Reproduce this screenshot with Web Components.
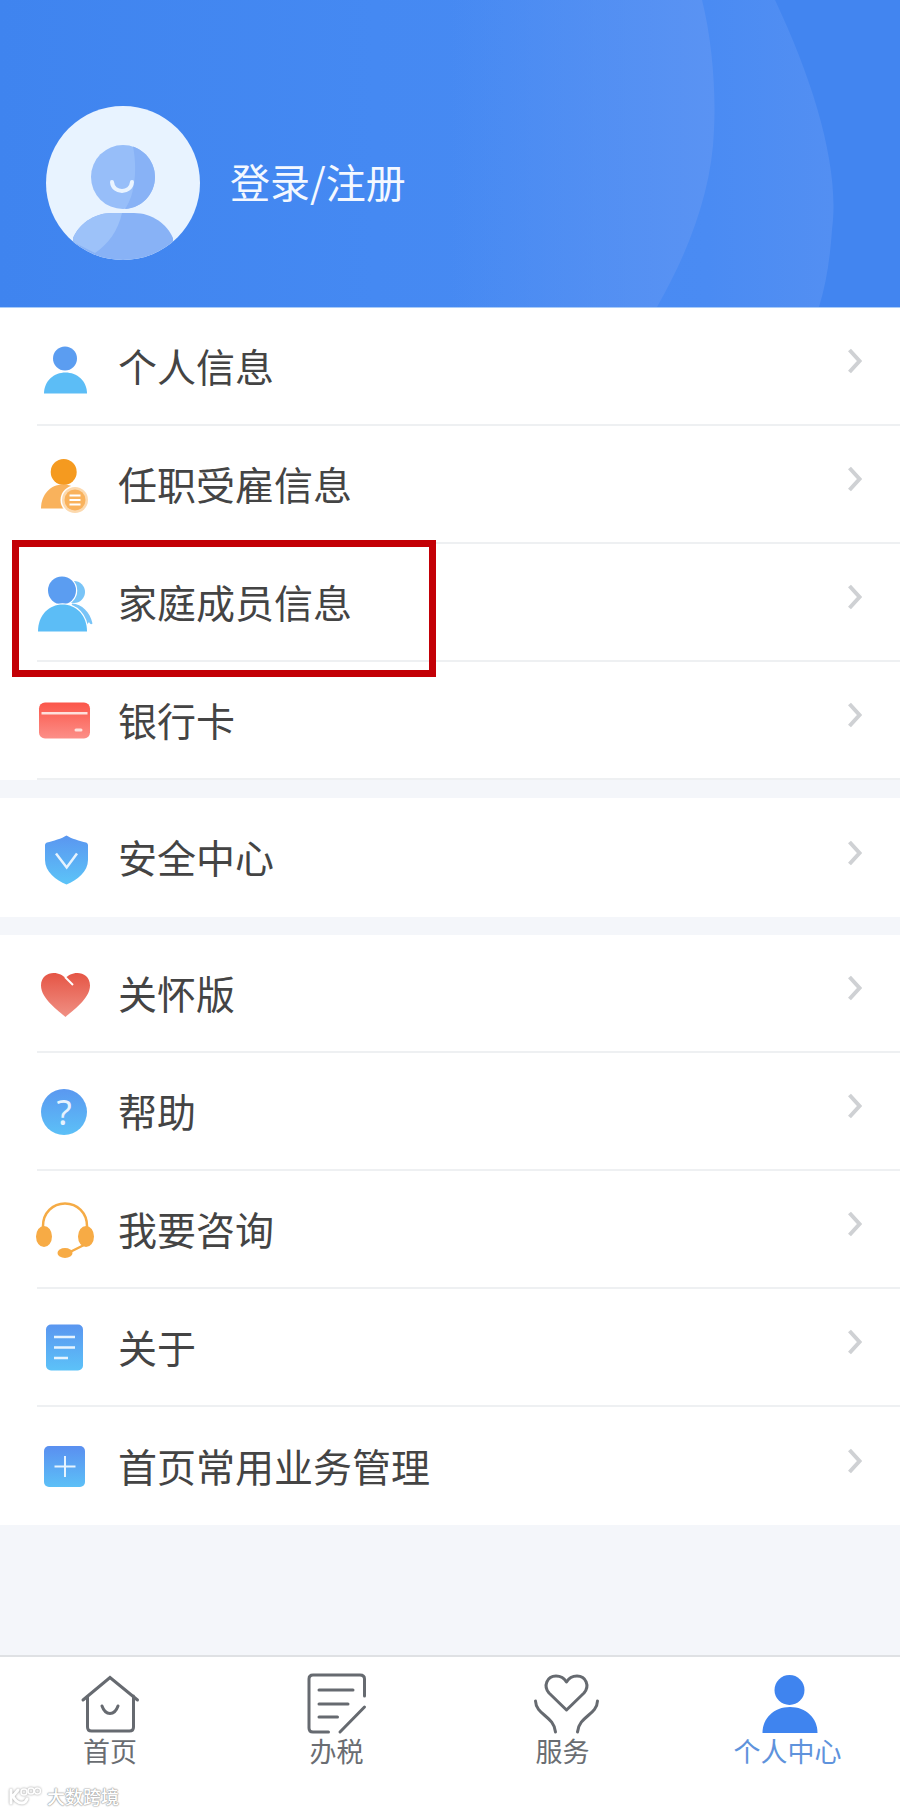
<!DOCTYPE html>
<html lang="zh">
<head>
<meta charset="utf-8">
<title>个人中心</title>
<style>
  html, body { margin: 0; padding: 0; }
  body {
    width: 900px;
    height: 1813px;
    display: flex;
    flex-direction: column;
    background: #f4f6fa;
    font-family: "Noto Sans CJK SC", "Noto Sans", sans-serif;
    overflow: hidden;
  }
  menu-group + menu-group { margin-top: 18px; }
  .spacer { flex: 1; }
</style>
</head>
<body>

<profile-header label="登录/注册"></profile-header>

<menu-group>
  <menu-row label="个人信息">
    <svg slot="icon" viewBox="0 0 60 60" width="60" height="60">
      <circle cx="29" cy="22.500" r="12" fill="#5b9df1"/>
      <path d="M8 57.500C8 45 18 36.500 29.500 36.500S51 45 51 57.500Z" fill="#5cbdf6"/>
    </svg>
  </menu-row>
  <menu-row label="任职受雇信息">
    <svg slot="icon" viewBox="0 0 60 60" width="60" height="60">
      <circle cx="27.700" cy="18" r="13" fill="#f59a1f"/>
      <path d="M5 54.500C5 41 14 30.500 27 30.500C37 30.500 44 36 46 44L36 54.500Z" fill="#f9b25c"/>
      <circle cx="39" cy="46" r="14.500" fill="#fff"/>
      <circle cx="39" cy="46" r="13" fill="#fcd9ae"/>
      <circle cx="39" cy="46" r="10.500" fill="#f9b25c"/>
      <path d="M33.500 41.500h11M33.500 46h11M33.500 50.500h11" stroke="#fff" stroke-width="2"/>
    </svg>
  </menu-row>
  <menu-row label="家庭成员信息" marked>
    <svg slot="icon" viewBox="0 0 60 60" width="60" height="60">
      <circle cx="38" cy="20" r="11" fill="#79c4f7"/>
      <path d="M36 31.500C46 32 54 40 56.500 51.500C55 53 54 52 53 50L45 60H30Z" fill="#79c4f7"/>
      <circle cx="26" cy="18.500" r="14" fill="#5b9df1" stroke="#fff" stroke-width="2.500" paint-order="stroke"/>
      <path d="M2 59.500C2 43 13 32.500 26.500 32.500S51 43 51 59.500Z" fill="#5cbdf6" stroke="#fff" stroke-width="2.500" paint-order="stroke"/>
    </svg>
  </menu-row>
  <menu-row label="银行卡">
    <svg slot="icon" viewBox="0 0 60 60" width="60" height="60">
      <defs><linearGradient id="card" x1="0" y1="0" x2="0" y2="1"><stop offset="0" stop-color="#fb5549"/><stop offset="1" stop-color="#fc8f88"/></linearGradient></defs>
      <rect x="3" y="12.500" width="51" height="36" rx="6" fill="url(#card)"/>
      <rect x="5.500" y="22" width="46" height="2.500" fill="#fde0dc"/>
      <rect x="38.500" y="38.500" width="8" height="3" rx="1.500" fill="#fde0dc"/>
    </svg>
  </menu-row>
</menu-group>

<menu-group>
  <menu-row label="安全中心" nosep tall>
    <svg slot="icon" viewBox="0 0 60 60" width="60" height="60">
      <defs><linearGradient id="shield" x1="0" y1="0" x2="0" y2="1"><stop offset="0" stop-color="#5a96f0"/><stop offset="1" stop-color="#5cc4f8"/></linearGradient></defs>
      <path d="M30.500 7.500C35 10.500 44 13 50 14.500C51.500 15 52 16 52 17.500V32C52 44 41 52 30.500 56.500C20 52 9 44 9 32V17.500C9 16 9.500 15 11 14.500C17 13 26 10.500 30.500 7.500Z" fill="url(#shield)"/>
      <path d="M20 25.500L30.700 39.500L41 25.500" fill="none" stroke="#e6f3fe" stroke-width="2.500"/>
    </svg>
  </menu-row>
</menu-group>

<menu-group>
  <menu-row label="关怀版">
    <svg slot="icon" viewBox="0 0 60 60" width="60" height="60">
      <defs><linearGradient id="heart" x1="0" y1="0" x2="0" y2="1"><stop offset="0" stop-color="#e55545"/><stop offset="1" stop-color="#f09084"/></linearGradient></defs>
      <path d="M29.500 54C23 48 5 36 5 22.500C5 14 11.500 10 17.500 10C23 10 27 12.500 29.500 15C32 12.500 36 10 41.500 10C47.500 10 54 14 54 22.500C54 36 36 48 29.500 54Z" fill="url(#heart)"/>
      <path d="M29 14L37 22" stroke="#fff" stroke-width="2"/>
    </svg>
  </menu-row>
  <menu-row label="帮助">
    <svg slot="icon" viewBox="0 0 60 60" width="60" height="60">
      <defs><linearGradient id="help" x1="0" y1="0" x2="0" y2="1"><stop offset="0" stop-color="#5a98f0"/><stop offset="1" stop-color="#5cc0f7"/></linearGradient></defs>
      <circle cx="28" cy="31" r="23" fill="url(#help)"/>
      <text x="28" y="44" text-anchor="middle" font-family="'Noto Sans', sans-serif" font-size="35" fill="#e6f3fe">?</text>
    </svg>
  </menu-row>
  <menu-row label="我要咨询">
    <svg slot="icon" viewBox="0 0 60 60" width="60" height="60">
      <path d="M7 34V27C7 14 16.500 4.500 29 4.500S51 14 51 27V34" fill="none" stroke="#f5ab45" stroke-width="2.500"/>
      <ellipse cx="8" cy="37.500" rx="8" ry="10.500" fill="#f7ab45"/>
      <ellipse cx="50" cy="37.500" rx="8" ry="10.500" fill="#f7ab45"/>
      <path d="M34 53L48 46" stroke="#f5ab45" stroke-width="2.500"/>
      <ellipse cx="29" cy="54" rx="7.500" ry="5" fill="#f7ab45"/>
    </svg>
  </menu-row>
  <menu-row label="关于">
    <svg slot="icon" viewBox="0 0 60 60" width="60" height="60">
      <defs><linearGradient id="doc" x1="0" y1="0" x2="0" y2="1"><stop offset="0" stop-color="#5a96f0"/><stop offset="1" stop-color="#5cc2f8"/></linearGradient></defs>
      <rect x="10" y="7.500" width="37" height="46" rx="5" fill="url(#doc)"/>
      <path d="M18 20H39M18 30.500H39M18 41H32" stroke="#e6f3fe" stroke-width="2.500"/>
    </svg>
  </menu-row>
  <menu-row label="首页常用业务管理" nosep>
    <svg slot="icon" viewBox="0 0 60 60" width="60" height="60">
      <defs><linearGradient id="plus" x1="0" y1="0" x2="0" y2="1"><stop offset="0" stop-color="#5a8ff0"/><stop offset="1" stop-color="#5cc0f7"/></linearGradient></defs>
      <rect x="8" y="10" width="41" height="41" rx="5" fill="url(#plus)"/>
      <path d="M18.500 30.500H39.500M29 20V41" stroke="#e6f3fe" stroke-width="2"/>
    </svg>
  </menu-row>
</menu-group>

<div class="spacer"></div>

<tab-bar>
  <tab-item label="首页" style="margin-right:5px">
    <svg slot="icon" viewBox="-2.500 0 60 60" width="60" height="60" style="overflow:visible">
      <path d="M0.500 27L27.500 4.500L55 27M5 23V54C5 56.500 6.500 58 9 58H47C49.500 58 51 56.500 51 54V23M19.500 33C23 43 32 43 35.500 33" fill="none" stroke="#666a70" stroke-width="3" stroke-linecap="round"/>
    </svg>
  </tab-item>
  <tab-item label="办税" style="margin-right:2px">
    <svg slot="icon" viewBox="-1 0 60 60" width="60" height="60" style="overflow:visible">
      <path d="M20.500 59H5C2 59 1 57.500 1 55V6C1 3.500 2 2 5 2H52C55 2 56.500 3.500 56.500 6V23M11 17H45M11 31H40M11 44H29.500M32 59L56.500 34" fill="none" stroke="#666a70" stroke-width="3" stroke-linecap="round"/>
    </svg>
  </tab-item>
  <tab-item label="服务">
    <svg slot="icon" viewBox="0 0 60 60" width="60" height="60" style="overflow:visible">
      <path d="M33.500 37L16 20C10 13 14 3 23 3C28 3 31.500 5.500 33.500 9C35.500 5.500 39 3 44 3C53 3 57 13 51 20Z" fill="none" stroke="#666a70" stroke-width="3" stroke-linejoin="round"/>
      <path d="M2.500 28C3 42 21 43 22.500 59M64.500 28C64 42 46 43 44.500 59" fill="none" stroke="#666a70" stroke-width="3" stroke-linecap="round"/>
    </svg>
  </tab-item>
  <tab-item label="个人中心" active>
    <svg slot="icon" viewBox="0 0 60 60" width="60" height="60">
      <circle cx="31.500" cy="17" r="15" fill="#3f84ef"/>
      <path d="M4.500 60C4.500 45 16 34 32 34S59.500 45 59.500 60Z" fill="#3f84ef"/>
    </svg>
  </tab-item>
</tab-bar>

<water-mark label="大数跨境"></water-mark>

<script>
class ProfileHeader extends HTMLElement {
  constructor() {
    super()
    const label = this.getAttribute('label')
    this.attachShadow({mode: 'open'}).innerHTML = `
      <style>
        :host {
          display: flex;
          align-items: center;
          flex: none;
          position: relative;
          height: 308px;
          padding: 59px 0 0 46px;
          box-sizing: border-box;
          overflow: hidden;
          background: #4285f0;
          border-bottom: 1px solid #a9ccf8;
        }
        .bg { position: absolute; inset: 0; width: 100%; height: 100%; }
        .avatar { position: relative; width: 154px; height: 154px; flex: none; }
        .name {
          position: relative;
          margin: 0 0 4px 30px;
          font-size: 40px;
          color: #f4f8ff;
        }
      </style>
      <svg class="bg" viewBox="0 0 900 308" preserveAspectRatio="none">
        <defs>
          <linearGradient id="b" gradientUnits="userSpaceOnUse" x1="0" y1="0" x2="832" y2="0">
            <stop offset="0" stop-color="#3f84ef"/>
            <stop offset="0.45" stop-color="#4589f2"/>
            <stop offset="0.85" stop-color="#4a8bf3"/>
            <stop offset="1" stop-color="#538ff2"/>
          </linearGradient>
          <linearGradient id="a" gradientUnits="userSpaceOnUse" x1="450" y1="0" x2="715" y2="0">
            <stop offset="0" stop-color="#5a93f3" stop-opacity="0"/>
            <stop offset="1" stop-color="#5a93f3"/>
          </linearGradient>
        </defs>
        <path d="M0 0H775C815 85 840 170 832 230C830 260 826 285 819 308H0Z" fill="url(#b)"/>
        <path d="M0 0H702C712 40 716 90 714 130C712 190 690 250 657 308H0Z" fill="url(#a)"/>
      </svg>
      <svg class="avatar" viewBox="0 0 154 154">
        <defs><clipPath id="c"><circle cx="77" cy="77" r="77"/></clipPath></defs>
        <circle cx="77" cy="77" r="77" fill="#e8f3ff"/>
        <circle cx="77" cy="71" r="32" fill="#97bef9"/>
        <path d="M87 40.500C100 45 109 57 109 71C109 88 96 102 79 103C90 88 91 60 87 40.500Z" fill="#88b2f6"/>
        <path d="M66 76C67 88 85 88 86 76" fill="none" stroke="#eaf4ff" stroke-width="4" stroke-linecap="round"/>
        <g clip-path="url(#c)">
          <path d="M27 132C33 118 48 107 66 107H88C106 107 121 118 127 132L127 154H27Z" fill="#88b2f6"/>
          <path d="M27 132C33 118 48 107 66 107H76C72 125 62 138 49 147L27 136Z" fill="#9dc2f9"/>
        </g>
      </svg>
      <span class="name">${label}</span>`
  }
}

class MenuGroup extends HTMLElement {
  constructor() {
    super()
    this.attachShadow({mode: 'open'}).innerHTML = `
      <style>
        :host { display: block; flex: none; background: #fff; }
      </style>
      <slot></slot>`
  }
}

class MenuRow extends HTMLElement {
  constructor() {
    super()
    const label = this.getAttribute('label')
    this.attachShadow({mode: 'open'}).innerHTML = `
      <style>
        :host { display: block; position: relative; }
        .row {
          display: flex;
          align-items: center;
          box-sizing: border-box;
          height: 118px;
          margin-left: 37px;
          padding-right: 38px;
          border-bottom: 2px solid #eef0f2;
          color: #444;
        }
        :host([nosep]) .row { border-bottom: 0; }
        :host([tall]) .row { height: 119px; }
        .icon { flex: none; width: 60px; height: 60px; margin-left: -1px; }
        .label { flex: 1; margin: 0 0 2px 22px; font-size: 39px; line-height: 1; }
        .arrow { flex: none; width: 15px; height: 28px; margin-bottom: 10px; }
        .mark {
          position: absolute;
          left: 12px;
          top: -4px;
          width: 424px;
          height: 137px;
          box-sizing: border-box;
          border: 7.500px solid #c30006;
          display: none;
        }
        :host([marked]) .mark { display: block; }
      </style>
      <div class="row">
        <div class="icon"><slot name="icon"></slot></div>
        <span class="label">${label}</span>
        <svg class="arrow" viewBox="0 0 15 28"><path d="M2.500 3L12.500 14L2.500 25" fill="none" stroke="#cfd1d4" stroke-width="4"/></svg>
      </div>
      <div class="mark"></div>`
  }
}

class TabBar extends HTMLElement {
  constructor() {
    super()
    this.attachShadow({mode: 'open'}).innerHTML = `
      <style>
        :host {
          display: grid;
          grid-template-columns: repeat(4, 1fr);
          flex: none;
          box-sizing: border-box;
          height: 158px;
          padding-top: 16px;
          background: #fff;
          border-top: 2px solid #dfe1e4;
        }
      </style>
      <slot></slot>`
  }
}

class TabItem extends HTMLElement {
  constructor() {
    super()
    const label = this.getAttribute('label')
    this.attachShadow({mode: 'open'}).innerHTML = `
      <style>
        :host {
          display: flex;
          flex-direction: column;
          align-items: center;
          color: #6a6d72;
        }
        :host([active]) { color: #5f93dc; }
        .icon { width: 60px; height: 60px; }
        .label { margin-top: 3px; font-size: 27px; line-height: 30px; }
      </style>
      <div class="icon"><slot name="icon"></slot></div>
      <span class="label">${label}</span>`
  }
}

class WaterMark extends HTMLElement {
  constructor() {
    super()
    const label = this.getAttribute('label')
    this.attachShadow({mode: 'open'}).innerHTML = `
      <style>
        :host {
          position: absolute;
          left: 8px;
          top: 1785px;
          display: flex;
          align-items: center;
          gap: 6px;
          height: 22px;
        }
        .text {
          font-size: 18px;
          line-height: 22px;
          font-weight: 500;
          color: #fff;
          text-shadow: 0 0 1.500px #999, 0 0 1.500px #999, 0 0 1px #aaa;
        }
        svg { filter: drop-shadow(0 0 1px #999); }
      </style>
      <svg width="33" height="20" viewBox="0 0 33 20">
        <path d="M3 4V17M10 4L5 10M5 10C7 15 10 17 14 17C16.500 17 18 15.500 19 13" fill="none" stroke="#fff" stroke-width="3" stroke-linecap="round"/>
        <circle cx="16" cy="6" r="3" fill="none" stroke="#fff" stroke-width="1.500"/>
        <circle cx="23" cy="5" r="3" fill="none" stroke="#fff" stroke-width="1.500"/>
        <circle cx="29.500" cy="5" r="3" fill="none" stroke="#fff" stroke-width="1.500"/>
      </svg>
      <span class="text">${label}</span>`
  }
}

customElements.define('profile-header', ProfileHeader)
customElements.define('menu-group', MenuGroup)
customElements.define('menu-row', MenuRow)
customElements.define('tab-bar', TabBar)
customElements.define('tab-item', TabItem)
customElements.define('water-mark', WaterMark)
</script>
</body>
</html>
